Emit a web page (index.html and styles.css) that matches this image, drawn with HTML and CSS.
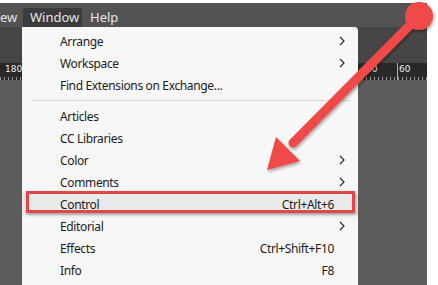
FILE: index.html
```html
<!DOCTYPE html>
<html>
<head>
<meta charset="utf-8">
<link rel="stylesheet" href="styles.css">
</head>
<body>
<div class="screen">
  <div class="menubar">
    <span class="mb-item mb-cut">ew</span>
    <span class="mb-item mb-active">Window</span>
    <span class="mb-item">Help</span>
  </div>
  <div class="workspace">
    <div class="side side-left">
      <div class="panel"></div>
      <div class="ruler"><span class="rlabel">180</span></div>
      <div class="canvas"></div>
    </div>
    <div class="menu">
      <div class="item"><span class="label">Arrange</span><span class="key"></span><span class="arrow"><svg width="6" height="10" viewBox="0 0 6 10"><polyline points="1,1 5,5 1,9" fill="none" stroke="#2a2a2a" stroke-width="1.2"/></svg></span></div>
      <div class="item"><span class="label">Workspace</span><span class="key"></span><span class="arrow"><svg width="6" height="10" viewBox="0 0 6 10"><polyline points="1,1 5,5 1,9" fill="none" stroke="#2a2a2a" stroke-width="1.2"/></svg></span></div>
      <div class="item"><span class="label">Find Extensions on Exchange...</span><span class="key"></span><span class="arrow"></span></div>
      <div class="sep"></div>
      <div class="item"><span class="label">Articles</span><span class="key"></span><span class="arrow"></span></div>
      <div class="item"><span class="label">CC Libraries</span><span class="key"></span><span class="arrow"></span></div>
      <div class="item"><span class="label">Color</span><span class="key"></span><span class="arrow"><svg width="6" height="10" viewBox="0 0 6 10"><polyline points="1,1 5,5 1,9" fill="none" stroke="#2a2a2a" stroke-width="1.2"/></svg></span></div>
      <div class="item"><span class="label">Comments</span><span class="key"></span><span class="arrow"><svg width="6" height="10" viewBox="0 0 6 10"><polyline points="1,1 5,5 1,9" fill="none" stroke="#2a2a2a" stroke-width="1.2"/></svg></span></div>
      <div class="item item-hl"><span class="label">Control</span><span class="key">Ctrl+Alt+6</span><span class="arrow"></span><span class="callout"></span></div>
      <div class="item"><span class="label">Editorial</span><span class="key"></span><span class="arrow"><svg width="6" height="10" viewBox="0 0 6 10"><polyline points="1,1 5,5 1,9" fill="none" stroke="#2a2a2a" stroke-width="1.2"/></svg></span></div>
      <div class="item"><span class="label">Effects</span><span class="key">Ctrl+Shift+F10</span><span class="arrow"></span></div>
      <div class="item"><span class="label">Info</span><span class="key">F8</span><span class="arrow"></span></div>
    </div>
    <div class="side side-right">
      <div class="panel"></div>
      <div class="ruler"><span class="rlabel rl-a">50</span><span class="rtick"></span><span class="rlabel rl-b">60</span></div>
      <div class="canvas"></div>
    </div>
  </div>
</div>
<svg class="annot" width="438" height="285" viewBox="0 0 438 285">
  <defs>
    <filter id="sh" x="-20%" y="-20%" width="140%" height="140%">
      <feDropShadow dx="1" dy="2" stdDeviation="1.5" flood-color="#000" flood-opacity="0.35"/>
    </filter>
  </defs>
  <g filter="url(#sh)" fill="#f04848">
    <line x1="419" y1="16" x2="293" y2="143" stroke="#f04848" stroke-width="9" stroke-linecap="round"/>
    <circle cx="419" cy="16" r="14"/>
    <polygon points="267,170 276,137 300,161"/>
  </g>
</svg>
</body>
</html>
```
FILE: styles.css
```css
* { box-sizing: border-box; }
html, body { margin: 0; padding: 0; }
body {
  width: 438px;
  height: 285px;
  overflow: hidden;
  background: #ffffff;
  font-family: "Noto Sans", "Open Sans", sans-serif;
  position: relative;
}
.screen {
  width: 427px;
  margin-top: 3px;
  height: 282px;
  display: flex;
  flex-direction: column;
  background: #5c5c5c;
}
.menubar {
  height: 24px;
  background: #535353;
  display: flex;
  align-items: flex-end;
}
.mb-item {
  color: #e6e6e6;
  font-size: 13px;
  height: 19px;
  line-height: 18px;
  padding: 0 8px;
}
.mb-cut { margin-left: -8px; width: 31px; }
.mb-active {
  background: #3b3b3b;
  border-radius: 3px 3px 0 0;
  width: 59px;
  padding: 0 7px;
}
.workspace {
  flex: 1;
  display: flex;
}
.side { display: flex; flex-direction: column; }
.side-left { width: 22px; }
.side-right { width: 69px; }
.panel { height: 36px; background: #464646; }
.ruler {
  height: 17px;
  position: relative;
  background-image: repeating-linear-gradient(90deg, #9a9a9a 0 1px, transparent 1px 4px);
  background-size: 100% 3px;
  background-position: 0 100%;
  background-repeat: no-repeat;
  background-color: #282828;
}
.rlabel {
  position: absolute;
  top: 1px;
  color: #f2f2f2;
  font-family: "DejaVu Sans", sans-serif;
  font-size: 9px;
  line-height: 11px;
}
.side-left .rlabel { left: 5px; }
.rl-a { left: 8px; }
.rl-b { left: 41px; }
.rtick {
  position: absolute;
  left: 39px;
  top: 0;
  width: 1px;
  height: 17px;
  background: #b0b0b0;
}
.canvas { flex: 1; background: #5c5c5c; }
.menu {
  width: 336px;
  background: #f7f7f7;
  border-radius: 0 4px 0 0;
  padding-top: 3px;
  display: flex;
  flex-direction: column;
}
.item {
  height: 22px;
  display: grid;
  grid-template-columns: 1fr auto 22px;
  align-items: center;
  padding-left: 38px;
  padding-right: 2px;
  font-size: 12px;
  letter-spacing: -0.35px;
  color: #1b1b1b;
  position: relative;
}
.key { text-align: right; }
.arrow { display: flex; align-items: center; padding-left: 5px; }
.arrow svg { display: block; }
.sep {
  height: 9px;
  display: flex;
  align-items: center;
  padding: 0 8px 0 9px;
}
.sep::before {
  content: "";
  flex: 1;
  height: 1px;
  background: #d9d9d9;
}
.item-hl { background: #e9e9e9; }
.callout {
  position: absolute;
  left: 4px;
  right: 3px;
  top: -2px;
  height: 22px;
  border: 3px solid #e04848;
  box-shadow: 1px 2px 3px rgba(0,0,0,0.3);
}
.annot {
  position: absolute;
  left: 0;
  top: 0;
}
```
